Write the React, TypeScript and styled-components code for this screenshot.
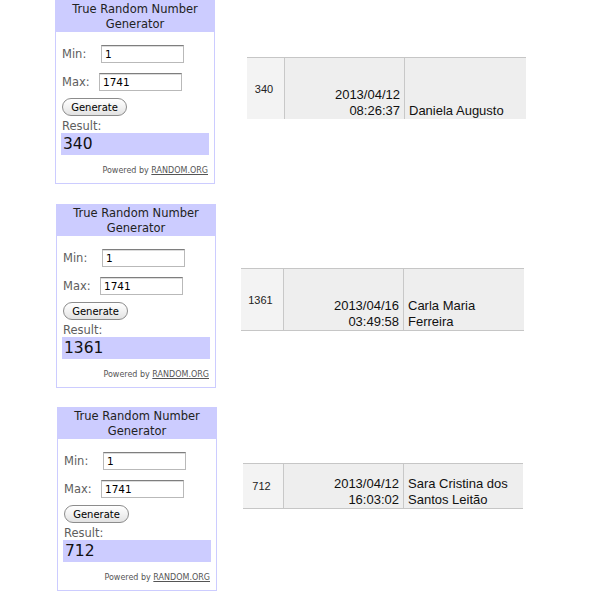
import React from 'react';
import styled, { createGlobalStyle } from 'styled-components';

const Global = createGlobalStyle`
  html, body { margin: 0; padding: 0; background: #ffffff; }
  body { width: 600px; height: 600px; overflow: hidden; }
`;

const Page = styled.div`
  display: flex;
  flex-direction: column;
`;

const Row = styled.section<{ $indent: number; $top: number }>`
  display: flex;
  align-items: flex-start;
  padding-left: ${p => p.$indent}px;
  margin-top: ${p => p.$top}px;
`;

const Widget = styled.div`
  width: 160px;
  height: 184px;
  box-sizing: border-box;
  border: 1px solid #ccccff;
  background: #ffffff;
  display: flex;
  flex-direction: column;
  font-family: "DejaVu Sans", Verdana, sans-serif;
`;

const Header = styled.div`
  height: 31px;
  background: #ccccff;
  color: #222222;
  font-size: 11.5px;
  line-height: 15px;
  padding-top: 1px;
  box-sizing: border-box;
  text-align: center;
`;

const Body = styled.div`
  display: flex;
  flex-direction: column;
  padding: 0 5px 0 6px;
`;

const FieldRow = styled.div<{ $top: number }>`
  display: flex;
  align-items: center;
  height: 18px;
  margin-top: ${p => p.$top}px;
`;

const Label = styled.span<{ $width?: number }>`
  display: inline-block;
  width: ${p => (p.$width ? `${p.$width}px` : 'auto')};
  color: #5e5e5e;
  font-size: 11.5px;
  line-height: 14px;
`;

const Field = styled.span`
  display: flex;
  align-items: center;
  width: 83px;
  height: 18px;
  box-sizing: border-box;
  padding-left: 3px;
  border: 1px solid #b9b9b9;
  border-top: 1px solid #7e7e7e;
  box-shadow: inset 0 1px 0 #dcdcdc;
  font-size: 10.5px;
  color: #000000;
  background: #ffffff;
`;

const Button = styled.span`
  display: flex;
  align-items: center;
  justify-content: center;
  width: 65px;
  height: 18px;
  box-sizing: border-box;
  margin-top: 7px;
  border: 1px solid #8c8c8c;
  border-radius: 9px;
  background: linear-gradient(#ffffff, #f2f2f2 50%, #e2e2e2);
  font-size: 10px;
  color: #000000;
`;

const ResultLabel = styled(Label)`
  margin-top: 3px;
`;

const ResultBox = styled.div`
  height: 22px;
  width: 148px;
  margin-left: -1px;
  padding-left: 2px;
  box-sizing: border-box;
  background: #ccccff;
  color: #111111;
  font-size: 15.5px;
  line-height: 22px;
`;

const Powered = styled.div`
  margin-top: 10px;
  padding-right: 1px;
  text-align: right;
  font-size: 8px;
  line-height: 12px;
  color: #555555;
`;

const OrgLink = styled.span`
  text-decoration: underline;
`;

const Table = styled.div<{ $left: number; $top: number; $first: number; $last: number; $height: number; $closed: boolean }>`
  display: grid;
  grid-template-columns: ${p => p.$first}px 120px ${p => p.$last}px;
  height: ${p => p.$height}px;
  margin-left: ${p => p.$left}px;
  margin-top: ${p => p.$top}px;
  border-top: 1px solid #c6c6c6;
  border-bottom: ${p => (p.$closed ? '1px solid #c6c6c6' : 'none')};
  font-family: "Liberation Sans", Arial, Helvetica, sans-serif;
  color: #111111;
`;

const IdCell = styled.div`
  display: flex;
  align-items: center;
  justify-content: center;
  padding-right: 3px;
  background: #f3f3f3;
  border-right: 1px solid #c8c8c8;
  font-size: 11px;
  color: #222222;
`;

const DateCell = styled.div`
  display: flex;
  align-items: flex-end;
  justify-content: flex-end;
  text-align: right;
  padding: 0 4px 0 4px;
  background: #eeeeee;
  border-right: 1px solid #c8c8c8;
  font-size: 13px;
  line-height: 16px;
`;

const NameCell = styled.div`
  display: flex;
  align-items: flex-end;
  padding: 0 4px 0 4px;
  background: #eeeeee;
  font-size: 13px;
  line-height: 16px;
`;

type Entry = {
  indent: number;
  top: number;
  result: string;
  tableLeft: number;
  tableTop: number;
  first: number;
  last: number;
  height: number;
  closed: boolean;
  date: string;
  time: string;
  name: string;
};

const entries: Entry[] = [
  { indent: 55, top: 0, result: '340', tableLeft: 32, tableTop: 57, first: 38, last: 121, height: 61, closed: false, date: '2013/04/12', time: '08:26:37', name: 'Daniela Augusto' },
  { indent: 56, top: 20, result: '1361', tableLeft: 25, tableTop: 64, first: 43, last: 120, height: 61, closed: true, date: '2013/04/16', time: '03:49:58', name: 'Carla Maria Ferreira' },
  { indent: 57, top: 19, result: '712', tableLeft: 26, tableTop: 56, first: 41, last: 119, height: 44, closed: true, date: '2013/04/12', time: '16:03:02', name: 'Sara Cristina dos Santos Leitão' },
];

function Generator({ result }: { result: string }) {
  return (
    <Widget>
      <Header>
        True Random Number
        <br />
        Generator
      </Header>
      <Body>
        <FieldRow $top={13}>
          <Label $width={39}>Min:</Label>
          <Field>1</Field>
        </FieldRow>
        <FieldRow $top={10}>
          <Label $width={37}>Max:</Label>
          <Field>1741</Field>
        </FieldRow>
        <Button>Generate</Button>
        <ResultLabel>Result:</ResultLabel>
        <ResultBox>{result}</ResultBox>
        <Powered>
          Powered by <OrgLink>RANDOM.ORG</OrgLink>
        </Powered>
      </Body>
    </Widget>
  );
}

export default function App() {
  return (
    <>
      <Global />
      <Page>
        {entries.map(e => (
          <Row key={e.result} $indent={e.indent} $top={e.top}>
            <Generator result={e.result} />
            <Table
              $left={e.tableLeft}
              $top={e.tableTop}
              $first={e.first}
              $last={e.last}
              $height={e.height}
              $closed={e.closed}
            >
              <IdCell>{e.result}</IdCell>
              <DateCell>
                {e.date}
                <br />
                {e.time}
              </DateCell>
              <NameCell>{e.name}</NameCell>
            </Table>
          </Row>
        ))}
      </Page>
    </>
  );
}
